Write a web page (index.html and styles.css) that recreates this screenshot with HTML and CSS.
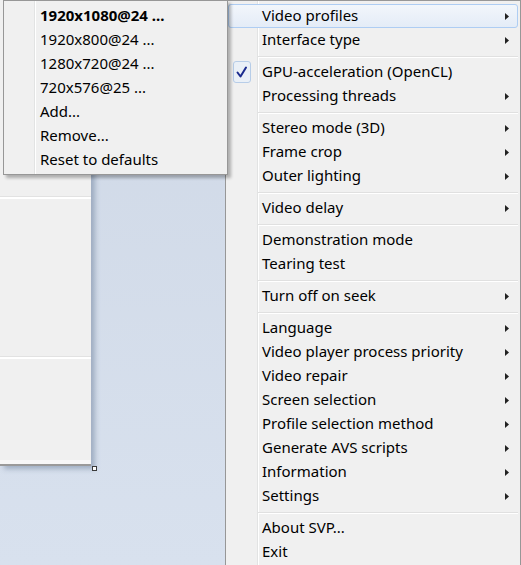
FILE: index.html
```html
<!DOCTYPE html>
<html>
<head>
<meta charset="utf-8">
<link rel="stylesheet" href="styles.css">
</head>
<body>
<div class="desktop">
  <div class="panel">
    <div class="pane-sec1"></div>
    <div class="pane-sec2"></div>
    <div class="pane-sec3"></div>
    <div class="grip"></div>
  </div>

  <div class="menu main">
    <div class="item hot"><span class="icon"></span><span class="label">Video profiles</span><svg class="arrow" width="4" height="7" viewBox="0 0 4 7"><polygon points="0,0 4,3.5 0,7"/></svg></div>
    <div class="item"><span class="icon"></span><span class="label">Interface type</span><svg class="arrow" width="4" height="7" viewBox="0 0 4 7"><polygon points="0,0 4,3.5 0,7"/></svg></div>
    <div class="sep"></div>
    <div class="item"><span class="icon"><span class="check"><svg width="18" height="22" viewBox="0 0 18 22"><path d="M4.5 11.5 L7.5 15.5 L13 6.5" fill="none" stroke="#1b2b8e" stroke-width="2" stroke-linejoin="round" stroke-linecap="round"/></svg></span></span><span class="label">GPU-acceleration (OpenCL)</span></div>
    <div class="item"><span class="icon"></span><span class="label">Processing threads</span><svg class="arrow" width="4" height="7" viewBox="0 0 4 7"><polygon points="0,0 4,3.5 0,7"/></svg></div>
    <div class="sep"></div>
    <div class="item"><span class="icon"></span><span class="label">Stereo mode (3D)</span><svg class="arrow" width="4" height="7" viewBox="0 0 4 7"><polygon points="0,0 4,3.5 0,7"/></svg></div>
    <div class="item"><span class="icon"></span><span class="label">Frame crop</span><svg class="arrow" width="4" height="7" viewBox="0 0 4 7"><polygon points="0,0 4,3.5 0,7"/></svg></div>
    <div class="item"><span class="icon"></span><span class="label">Outer lighting</span><svg class="arrow" width="4" height="7" viewBox="0 0 4 7"><polygon points="0,0 4,3.5 0,7"/></svg></div>
    <div class="sep"></div>
    <div class="item"><span class="icon"></span><span class="label">Video delay</span><svg class="arrow" width="4" height="7" viewBox="0 0 4 7"><polygon points="0,0 4,3.5 0,7"/></svg></div>
    <div class="sep"></div>
    <div class="item"><span class="icon"></span><span class="label">Demonstration mode</span></div>
    <div class="item"><span class="icon"></span><span class="label">Tearing test</span></div>
    <div class="sep"></div>
    <div class="item"><span class="icon"></span><span class="label">Turn off on seek</span><svg class="arrow" width="4" height="7" viewBox="0 0 4 7"><polygon points="0,0 4,3.5 0,7"/></svg></div>
    <div class="sep"></div>
    <div class="item"><span class="icon"></span><span class="label">Language</span><svg class="arrow" width="4" height="7" viewBox="0 0 4 7"><polygon points="0,0 4,3.5 0,7"/></svg></div>
    <div class="item"><span class="icon"></span><span class="label">Video player process priority</span><svg class="arrow" width="4" height="7" viewBox="0 0 4 7"><polygon points="0,0 4,3.5 0,7"/></svg></div>
    <div class="item"><span class="icon"></span><span class="label">Video repair</span><svg class="arrow" width="4" height="7" viewBox="0 0 4 7"><polygon points="0,0 4,3.5 0,7"/></svg></div>
    <div class="item"><span class="icon"></span><span class="label">Screen selection</span><svg class="arrow" width="4" height="7" viewBox="0 0 4 7"><polygon points="0,0 4,3.5 0,7"/></svg></div>
    <div class="item"><span class="icon"></span><span class="label">Profile selection method</span><svg class="arrow" width="4" height="7" viewBox="0 0 4 7"><polygon points="0,0 4,3.5 0,7"/></svg></div>
    <div class="item"><span class="icon"></span><span class="label">Generate AVS scripts</span><svg class="arrow" width="4" height="7" viewBox="0 0 4 7"><polygon points="0,0 4,3.5 0,7"/></svg></div>
    <div class="item"><span class="icon"></span><span class="label">Information</span><svg class="arrow" width="4" height="7" viewBox="0 0 4 7"><polygon points="0,0 4,3.5 0,7"/></svg></div>
    <div class="item"><span class="icon"></span><span class="label">Settings</span><svg class="arrow" width="4" height="7" viewBox="0 0 4 7"><polygon points="0,0 4,3.5 0,7"/></svg></div>
    <div class="sep"></div>
    <div class="item"><span class="icon"></span><span class="label">About SVP...</span></div>
    <div class="item"><span class="icon"></span><span class="label">Exit</span></div>
  </div>

  <div class="menu sub">
    <div class="item"><span class="icon"></span><span class="label bold">1920x1080@24 ...</span></div>
    <div class="item"><span class="icon"></span><span class="label">1920x800@24 ...</span></div>
    <div class="item"><span class="icon"></span><span class="label">1280x720@24 ...</span></div>
    <div class="item"><span class="icon"></span><span class="label">720x576@25 ...</span></div>
    <div class="item"><span class="icon"></span><span class="label">Add...</span></div>
    <div class="item"><span class="icon"></span><span class="label">Remove...</span></div>
    <div class="item"><span class="icon"></span><span class="label">Reset to defaults</span></div>
  </div>
</div>
</body>
</html>
```

FILE: styles.css
```css
html, body {
  margin: 0;
  padding: 0;
}

.desktop {
  position: relative;
  width: 521px;
  height: 565px;
  overflow: hidden;
  background: linear-gradient(#cfd8e6, #d8e1ee);
  font-family: "Noto Sans", "Open Sans", sans-serif;
  font-size: 15px;
  color: #000;
}

.panel {
  position: relative;
  width: 91px;
  display: flex;
  flex-direction: column;
  background: #f0f0f0;
  border-bottom: 2px solid #9a9a9a;
  box-shadow: 4px 3px 5px rgba(95, 115, 145, 0.45);
}

.pane-sec1 {
  height: 196px;
  border-bottom: 1px solid #e2e2e2;
}

.pane-sec2 {
  height: 157px;
  border-top: 2px solid #fff;
  border-bottom: 1px solid #e2e2e2;
}

.pane-sec3 {
  height: 101px;
  border-top: 2px solid #fff;
  border-bottom: 4px solid #f7f7f7;
}

.grip {
  position: absolute;
  left: 92px;
  top: 466px;
  width: 5px;
  height: 5px;
  box-sizing: border-box;
  border: 1px solid #3a3a3a;
  background: #fff;
}

.menu {
  position: absolute;
  top: 0;
  background-color: #f0f0f0;
  border: 1px solid #979797;
  padding: 3px 2px;
}

.main {
  left: 225px;
  width: 290px;
  background-image: linear-gradient(to right, transparent 31px, #e2e3e3 31px, #e2e3e3 32px, #fff 32px, #fff 33px, transparent 33px);
}

.sub {
  left: 3px;
  width: 219px;
  padding-bottom: 2px;
  background-image: linear-gradient(to right, transparent 30px, #e2e3e3 30px, #e2e3e3 31px, #fff 31px, #fff 32px, transparent 32px);
  box-shadow: 3px 3px 3px rgba(0, 0, 0, 0.28);
  z-index: 2;
}

.item {
  display: flex;
  align-items: center;
  height: 24px;
  box-sizing: border-box;
  border: 1px solid transparent;
  border-radius: 3px;
  padding-right: 8px;
}

.item.hot {
  border-color: #aecdf3;
  background: linear-gradient(#f2f6fb, #e4ecf7);
}

.icon {
  flex: none;
  width: 33px;
  height: 22px;
  display: flex;
  align-items: center;
}

.check {
  display: block;
  width: 18px;
  height: 22px;
  margin-left: 4px;
  box-sizing: border-box;
  border: 1px solid #b7cde8;
  border-radius: 3px;
  background: #eaf0f7;
}

.check svg {
  display: block;
  margin: -1px 0 0 -1px;
}

.label {
  flex: 1;
  white-space: nowrap;
  line-height: 20px;
  margin-bottom: 2px;
}

.bold {
  font-weight: bold;
}

.arrow {
  flex: none;
  display: block;
  fill: #222;
}

.sep {
  height: 2px;
  box-sizing: border-box;
  margin: 4px 0 2px 30px;
  border-top: 1px solid #e0e0e0;
  border-bottom: 1px solid #fff;
}
```
